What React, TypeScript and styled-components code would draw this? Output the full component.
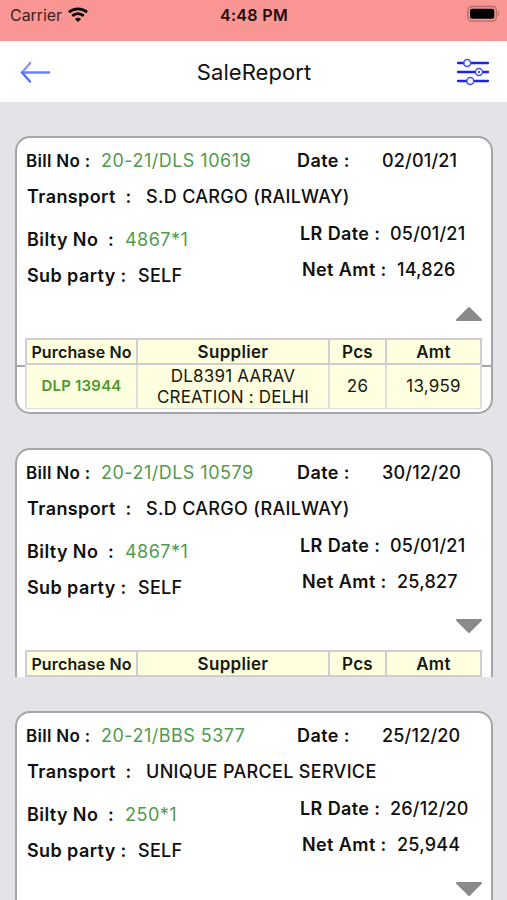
import React from "react";
import styled, { createGlobalStyle, css } from "styled-components";

const Global = createGlobalStyle`
  * { box-sizing: border-box; }
  body { margin: 0; background: #e4e3e8; font-family: Inter, "Liberation Sans", sans-serif; color: #101010; }
`;

const Screen = styled.div`
  height: 900px;
  overflow: hidden;
  background: #e4e3e8;
`;

const StatusBar = styled.div`
  height: 41px;
  padding: 0 9px 0 10px;
  display: grid;
  grid-template-columns: 1fr auto 1fr;
  background: #f99693;
`;

const Carrier = styled.div`
  display: flex;
  gap: 6px;
  font-size: 16px;
  line-height: 30px;
  letter-spacing: -0.05px;
  color: #3d2022;
  svg { margin-top: 6.5px; }
`;

const Clock = styled.div`
  font-size: 16px;
  font-weight: 600;
  letter-spacing: 0.35px;
  line-height: 30px;
  color: #1d0b0b;
`;

const Battery = styled.div`
  display: flex;
  justify-content: flex-end;
  padding-top: 5px;
  margin-right: -5px;
`;

const Header = styled.header`
  height: 61px;
  padding: 0 17px 0 20px;
  display: grid;
  grid-template-columns: 60px 1fr 60px;
  align-items: center;
  background: #fff;
  svg:last-child { justify-self: end; }
`;

const Title = styled.h1`
  margin: 0 0 0 -2px;
  text-align: center;
  font-size: 22px;
  font-weight: 400;
  letter-spacing: 0.05px;
`;

const List = styled.main`
  padding: 34px 14px 0 15px;
  display: flex;
  flex-direction: column;
  gap: 34px;
`;

const Card = styled.article`
  flex: none;
`;

const Summary = styled.section<{ $open?: boolean }>`
  height: ${(p) => (p.$open ? 231 : 229)}px;
  border: 2px solid #a6a6a8;
  border-bottom-width: ${(p) => (p.$open ? 2 : 0)}px;
  border-radius: 15px 15px 0 0;
  background: #fff;
`;

const Line = styled.div`
  display: flex;
  padding: 0 10px;
  height: 24px;
  & + & { margin-top: 12.5px; }
`;

const TopLines = styled.div`
  padding-top: 10.5px;
`;

const Columns = styled.div`
  display: flex;
  justify-content: space-between;
  padding-top: 12.5px;
`;

const Column = styled.div<{ $drop?: boolean; $width: number }>`
  width: ${(p) => p.$width}px;
  padding-top: ${(p) => (p.$drop ? 6 : 0)}px;
`;

const Label = styled.span<{ $width: number; $small?: boolean; $inset?: number }>`
  width: ${(p) => p.$width}px;
  padding-left: ${(p) => p.$inset ?? 0}px;
  flex: none;
  white-space: pre;
  font-size: ${(p) => (p.$small ? 17 : 18)}px;
  font-weight: 600;
  line-height: 24px;
  letter-spacing: ${(p) => (p.$small ? 0.3 : 0.4)}px;
`;

const BillLabel = styled(Label)`
  margin-left: -1px;
`;

const Value = styled.span<{ $link?: boolean }>`
  flex: none;
  white-space: pre;
  font-size: 18px;
  line-height: 24px;
  font-weight: 500;
  letter-spacing: 0.32px;
  ${(p) => p.$link && css`
    color: #4f9b50;
    font-weight: 400;
    letter-spacing: 0.48px;
  `}
`;

const NumberValue = styled(Value)`
  letter-spacing: 0.2px;
`;

const BillValue = styled(Value)`
  width: 196px;
`;

const Toggle = styled.div`
  display: flex;
  justify-content: flex-end;
  padding: 17.5px 8px 0 0;
  height: 50px;
`;

const Row = styled.div<{ $head?: boolean }>`
  display: grid;
  grid-template-columns: 109px 190px 55px 93px;
  gap: 2px;
  width: 457px;
  padding: ${(p) => (p.$head ? "2px" : "0 2px 1px")};
  height: ${(p) => (p.$head ? 27 : 44)}px;
  background: ${(p) => (p.$head ? "#cfcdd3" : "#dfddde")};
`;

const HeadRow = styled(Row)`
  margin-left: 8px;
  position: relative;
`;

const Cell = styled.div<{ $head?: boolean; $code?: boolean }>`
  display: flex;
  align-items: center;
  justify-content: center;
  text-align: center;
  white-space: pre;
  background: #feffdf;
  font-size: ${(p) => (p.$code ? 15 : 17)}px;
  font-weight: ${(p) => (p.$head || p.$code ? 600 : 400)};
  color: ${(p) => (p.$code ? "#4d9a27" : "#18180f")};
  line-height: 20.5px;
  letter-spacing: ${(p) => (p.$head ? 0.3 : 0.2)}px;
  padding-top: ${(p) => (p.$head ? 1 : 0)}px;
`;

const NarrowCell = styled(Cell)`
  font-size: 16px;
  letter-spacing: 0.15px;
`;

const Details = styled.section`
  display: flex;
  height: 47px;
  padding: 0 8px;
  border: 2px solid #a6a6a8;
  border-top: 0;
  border-radius: 0 0 15px 15px;
  background: #fff;
`;

const DetailRow = styled(Row)`
  position: relative;
  flex: none;
  margin-top: -2px;
`;

const BackIcon = () => (
  <svg width="32" height="24" viewBox="0 0 32 24" fill="none" strokeWidth="2.4" strokeLinecap="round">
    <path d="M10.2 3 2 12.500" stroke="#8b95fb" />
    <path d="M2 12.500h27" stroke="#6c82fb" />
    <path d="M2 12.500l8 9" stroke="#5271f7" />
  </svg>
);

const FilterIcon = () => (
  <svg width="34" height="28" viewBox="0 0 34 28" fill="none" stroke="#1a24e6" strokeWidth="2.3" strokeLinecap="round">
    <path d="M2 5h5.500M15 5h17M2 14h17M27 14h5M2 23h8.500M18 23h14" />
    <g stroke="#4650ee" strokeWidth="1.5">
      <circle cx="11.200" cy="5" r="3.500" />
      <circle cx="23" cy="14" r="3.500" />
      <circle cx="14.200" cy="23" r="3.500" />
    </g>
    <circle cx="23" cy="14" r="1.100" fill="#1a24e6" stroke="none" />
  </svg>
);

const WifiIcon = () => (
  <svg width="20" height="15" viewBox="0 0 20 15" fill="none" stroke="#080303" strokeWidth="2.800">
    <path d="M1 5.200C6 .8 14 .8 19 5.200" />
    <path d="M4.300 8.900c3.300-2.900 8.100-2.900 11.400 0" />
    <path d="M10 15 6.900 11.900c1.800-1.500 4.400-1.500 6.200 0z" fill="#080303" stroke="none" />
  </svg>
);

const BatteryIcon = () => (
  <svg width="36" height="18" viewBox="0 0 36 18">
    <rect x=".9" y="1.500" width="28.500" height="14.600" rx="4" fill="none" stroke="#b26b69" strokeWidth="1.300" />
    <rect x="3" y="3.800" width="24.300" height="10" rx="2" fill="#000" />
    <path d="M31 6.500c1.500.5 1.500 4.100 0 4.600z" fill="#b26b69" />
  </svg>
);

const Triangle = ({ up }: { up?: boolean }) => (
  <svg width="28" height="16" viewBox="0 0 28 16" fill="#8a8a8a" stroke="#8a8a8a" strokeWidth="2" strokeLinejoin="round">
    <path d={up ? "M2 14 14 2l12 12z" : "M2 2 14 14 26 2z"} />
  </svg>
);

type Purchase = { code: string; supplier: string; pcs: string; amount: string };
type Sale = {
  bill: string; date: string; transport: string; bilty: string; party: string;
  lrDate: string; net: string; purchase?: Purchase;
};

const sales: Sale[] = [
  {
    bill: "20-21/DLS 10619", date: "02/01/21", transport: "S.D CARGO (RAILWAY)", bilty: "4867*1",
    party: "SELF", lrDate: "05/01/21", net: "14,826",
    purchase: { code: "DLP 13944", supplier: "DL8391 AARAV\nCREATION : DELHI", pcs: "26", amount: "13,959" },
  },
  {
    bill: "20-21/DLS 10579", date: "30/12/20", transport: "S.D CARGO (RAILWAY)", bilty: "4867*1",
    party: "SELF", lrDate: "05/01/21", net: "25,827",
  },
  {
    bill: "20-21/BBS 5377", date: "25/12/20", transport: "UNIQUE PARCEL SERVICE", bilty: "250*1",
    party: "SELF", lrDate: "26/12/20", net: "25,944",
  },
];

const SaleCard = ({ sale }: { sale: Sale }) => (
  <Card>
    <Summary $open={!!sale.purchase}>
      <TopLines>
        <Line>
          <BillLabel $width={75} $small>Bill No :</BillLabel>
          <BillValue $link>{sale.bill}</BillValue>
          <Label $width={85}>Date :</Label>
          <NumberValue>{sale.date}</NumberValue>
        </Line>
        <Line>
          <Label $width={119}>{"Transport  :"}</Label>
          <Value>{sale.transport}</Value>
        </Line>
      </TopLines>
      <Columns>
        <Column $width={270} $drop>
          <Line>
            <Label $width={98}>{"Bilty No  :"}</Label>
            <Value $link>{sale.bilty}</Value>
          </Line>
          <Line>
            <Label $width={111}>Sub party :</Label>
            <Value>{sale.party}</Value>
          </Line>
        </Column>
        <Column $width={201}>
          <Line>
            <Label $width={90}>LR Date :</Label>
            <NumberValue>{sale.lrDate}</NumberValue>
          </Line>
          <Line>
            <Label $width={97} $inset={2}>Net Amt :</Label>
            <NumberValue>{sale.net}</NumberValue>
          </Line>
        </Column>
      </Columns>
      <Toggle><Triangle up={!!sale.purchase} /></Toggle>
      <HeadRow $head>
        <NarrowCell $head>Purchase No</NarrowCell>
        <Cell $head>Supplier</Cell>
        <Cell $head>Pcs</Cell>
        <Cell $head>Amt</Cell>
      </HeadRow>
    </Summary>
    {sale.purchase && (
      <Details>
        <DetailRow>
          <Cell $code>{sale.purchase.code}</Cell>
          <Cell>{sale.purchase.supplier}</Cell>
          <Cell>{sale.purchase.pcs}</Cell>
          <Cell>{sale.purchase.amount}</Cell>
        </DetailRow>
      </Details>
    )}
  </Card>
);

export default function App() {
  return (
    <Screen>
      <Global />
      <StatusBar>
        <Carrier>Carrier<WifiIcon /></Carrier>
        <Clock>4:48 PM</Clock>
        <Battery><BatteryIcon /></Battery>
      </StatusBar>
      <Header>
        <BackIcon />
        <Title>SaleReport</Title>
        <FilterIcon />
      </Header>
      <List>
        {sales.map((sale) => <SaleCard key={sale.bill} sale={sale} />)}
      </List>
    </Screen>
  );
}
